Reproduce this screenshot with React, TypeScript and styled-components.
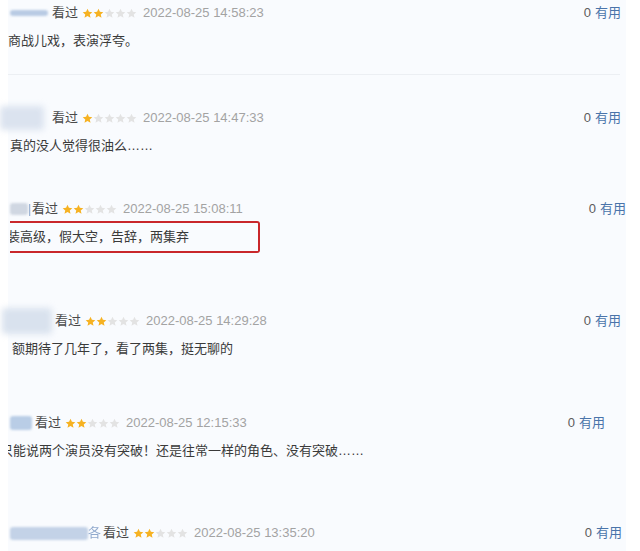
import React from 'react'
import styled, { createGlobalStyle } from 'styled-components'

interface Blurb {
  x: number
  w: number
  h: number
  color: string
  soft: number
}

interface Review {
  top: number
  blur: Blurb
  tail?: string
  tailW?: number
  who: number
  stars: number
  date: string
  right: number
  text?: string
  textX?: number
  indent?: number
  marked?: boolean
  divider?: boolean
}

const PANEL_X = 8

const reviews: Review[] = [
  {
    top: 2,
    blur: { x: 10, w: 38, h: 6, color: '#b9cbe4', soft: 1.2 },
    who: 52,
    stars: 2,
    date: '2022-08-25 14:58:23',
    right: 5,
    text: '商战儿戏，表演浮夸。',
    textX: 8,
    divider: true
  },
  {
    top: 33,
    blur: { x: 0, w: 44, h: 24, color: '#dbe3ef', soft: 3 },
    who: 52,
    stars: 1,
    date: '2022-08-25 14:47:33',
    right: 5,
    text: '真的没人觉得很油么……',
    textX: 10
  },
  {
    top: 43,
    blur: { x: 10, w: 18, h: 12, color: '#d0d7e2', soft: 1 },
    tail: '|',
    tailW: 4,
    who: 32,
    stars: 2,
    date: '2022-08-25 15:08:11',
    right: -2,
    text: '装高级，假大空，告辞，两集弃',
    textX: 10,
    indent: -3,
    marked: true
  },
  {
    top: 64,
    blur: { x: 2, w: 50, h: 26, color: '#d9e2ee', soft: 3 },
    who: 55,
    stars: 2,
    date: '2022-08-25 14:29:28',
    right: 5,
    text: '额期待了几年了，看了两集，挺无聊的',
    textX: 12
  },
  {
    top: 54,
    blur: { x: 10, w: 22, h: 14, color: '#b9cde6', soft: 1 },
    who: 35,
    stars: 2,
    date: '2022-08-25 12:15:33',
    right: 21,
    text: '只能说两个演员没有突破！还是往常一样的角色、没有突破……',
    textX: 8,
    indent: -8
  },
  {
    top: 62,
    blur: { x: 10, w: 78, h: 13, color: '#c3d2e7', soft: 1.2 },
    tail: '各',
    tailW: 13,
    who: 103,
    stars: 2,
    date: '2022-08-25 13:35:20',
    right: 4
  }
]

const GlobalStyle = createGlobalStyle`
  html, body {
    margin: 0;
    padding: 0;
    background: #ffffff;
  }
`

const Page = styled.div`
  width: 640px;
  height: 551px;
  overflow: hidden;
  background: #ffffff;
  font-family: "Liberation Sans", "Noto Sans CJK SC", sans-serif;
  font-size: 13px;
`

const Panel = styled.div`
  margin-left: ${PANEL_X}px;
  width: 618px;
  height: 551px;
  padding-top: 1px;
  box-sizing: border-box;
  background: #f9fbfe;
`

const Entry = styled.div<{ $top: number }>`
  margin-top: ${({ $top }) => $top}px;
`

const Header = styled.div<{ $right: number }>`
  display: flex;
  align-items: center;
  height: 20px;
  padding-right: ${({ $right }) => $right}px;
  line-height: 20px;
  white-space: nowrap;
`

const Blur = styled.span<{ $x: number; $w: number; $h: number; $color: string; $soft: number }>`
  flex: none;
  display: block;
  margin-left: ${({ $x }) => $x}px;
  width: ${({ $w }) => $w}px;
  height: ${({ $h }) => $h}px;
  border-radius: 3px;
  background: ${({ $color }) => $color};
  filter: blur(${({ $soft }) => $soft}px);
`

const Tail = styled.span<{ $w: number }>`
  flex: none;
  width: ${({ $w }) => $w}px;
  overflow: hidden;
  color: #7f9cc6;
  opacity: 0.85;
`

const Who = styled.span<{ $gap: number }>`
  margin-left: ${({ $gap }) => $gap}px;
  color: #4a4a4a;
`

const Stars = styled.span`
  display: flex;
  margin-left: 4px;
`

const Date = styled.span`
  margin-left: 6px;
  color: #a3a3a3;
`

const Useful = styled.span`
  margin-left: auto;
  color: #5c5c5c;

  a {
    margin-left: 4px;
    color: #4a74aa;
    text-decoration: none;
  }
`

const Comment = styled.div<{ $x: number; $marked: boolean }>`
  position: relative;
  width: fit-content;
  margin-top: 8px;
  margin-left: ${({ $x }) => $x}px;
  height: 20px;
  line-height: 20px;
  color: #3a3a3a;

  &::after {
    content: '';
    display: ${({ $marked }) => ($marked ? 'block' : 'none')};
    position: absolute;
    top: -6px;
    bottom: -6px;
    left: 0;
    width: 250px;
    border: 2px solid #c9272b;
    border-left: none;
    border-radius: 0 3px 3px 0;
    box-sizing: border-box;
  }
`

const CommentText = styled.div<{ $indent: number }>`
  overflow: hidden;
  white-space: nowrap;
  text-indent: ${({ $indent }) => $indent}px;
`

const Divider = styled.div`
  margin-top: 23px;
  width: 612px;
  height: 1px;
  background: #eceff3;
`

const Star = ({ on }: { on: boolean }): JSX.Element => (
  <svg width='11' height='11' viewBox='0 0 24 24'>
    <path
      d='M12 1.5l3.1 6.9 7.4.7-5.6 5 1.7 7.4L12 17.7l-6.6 3.8 1.7-7.4-5.6-5 7.4-.7z'
      fill={on ? '#f6b222' : '#e3e3e3'}
    />
  </svg>
)

const ReviewRow = ({ review }: { review: Review }): JSX.Element => {
  const { blur } = review
  const blurEnd = blur.x + blur.w + (review.tailW ?? 0)

  return (
    <Entry $top={review.top}>
      <Header $right={review.right}>
        <Blur $x={blur.x - PANEL_X} $w={blur.w} $h={blur.h} $color={blur.color} $soft={blur.soft} />
        {review.tail && <Tail $w={review.tailW ?? 0}>{review.tail}</Tail>}
        <Who $gap={review.who - blurEnd}>看过</Who>
        <Stars>
          {[0, 1, 2, 3, 4].map((i) => <Star key={i} on={i < review.stars} />)}
        </Stars>
        <Date>{review.date}</Date>
        <Useful>0<a href='#'>有用</a></Useful>
      </Header>
      {review.text && (
        <Comment $x={(review.textX ?? PANEL_X) - PANEL_X} $marked={!!review.marked}>
          <CommentText $indent={review.indent ?? 0}>{review.text}</CommentText>
        </Comment>
      )}
      {review.divider && <Divider />}
    </Entry>
  )
}

export default function App (): JSX.Element {
  return (
    <Page>
      <GlobalStyle />
      <Panel>
        {reviews.map((r) => <ReviewRow key={r.date} review={r} />)}
      </Panel>
    </Page>
  )
}
